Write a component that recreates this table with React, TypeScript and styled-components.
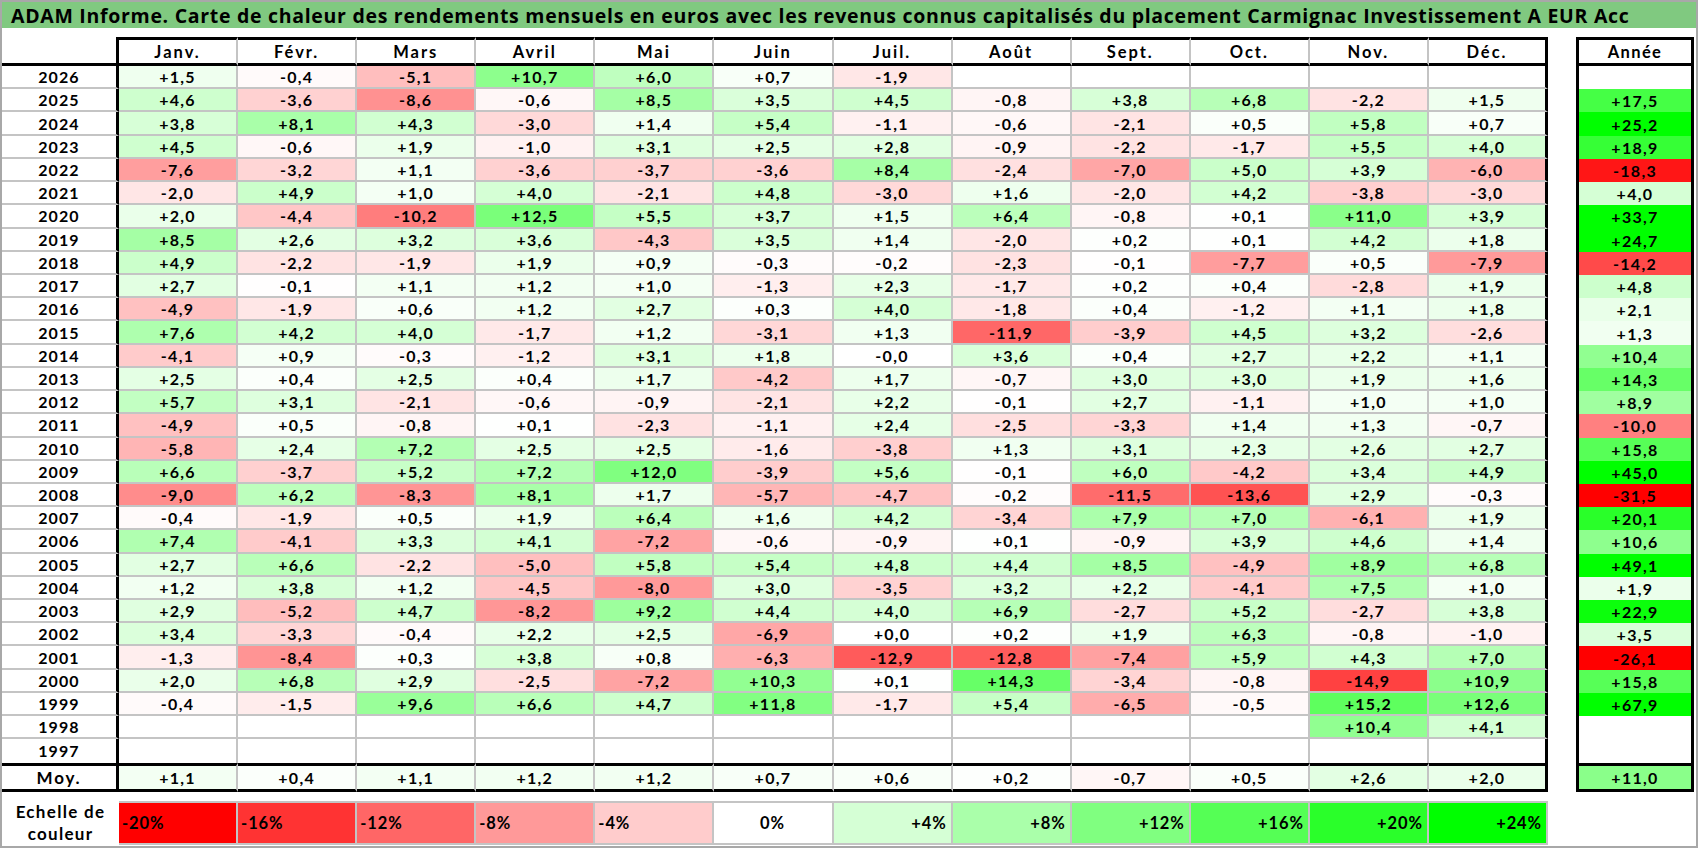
import styled, { createGlobalStyle } from 'styled-components';

const GlobalStyle = createGlobalStyle`
  html, body {
    margin: 0;
    padding: 0;
    background: #ffffff;
  }
  body {
    font-family: Lato, "Open Sans", "Liberation Sans", sans-serif;
    color: #000000;
  }
`;

const MONTHS = ['Janv.', 'Févr.', 'Mars', 'Avril', 'Mai', 'Juin', 'Juil.', 'Août', 'Sept.', 'Oct.', 'Nov.', 'Déc.'];

// year, 12 months then the year total; '.' marks an empty cell
const ROWS: [string, string][] = [
  ['2026', '+1,5 -0,4 -5,1 +10,7 +6,0 +0,7 -1,9 . . . . . .'],
  ['2025', '+4,6 -3,6 -8,6 -0,6 +8,5 +3,5 +4,5 -0,8 +3,8 +6,8 -2,2 +1,5 +17,5'],
  ['2024', '+3,8 +8,1 +4,3 -3,0 +1,4 +5,4 -1,1 -0,6 -2,1 +0,5 +5,8 +0,7 +25,2'],
  ['2023', '+4,5 -0,6 +1,9 -1,0 +3,1 +2,5 +2,8 -0,9 -2,2 -1,7 +5,5 +4,0 +18,9'],
  ['2022', '-7,6 -3,2 +1,1 -3,6 -3,7 -3,6 +8,4 -2,4 -7,0 +5,0 +3,9 -6,0 -18,3'],
  ['2021', '-2,0 +4,9 +1,0 +4,0 -2,1 +4,8 -3,0 +1,6 -2,0 +4,2 -3,8 -3,0 +4,0'],
  ['2020', '+2,0 -4,4 -10,2 +12,5 +5,5 +3,7 +1,5 +6,4 -0,8 +0,1 +11,0 +3,9 +33,7'],
  ['2019', '+8,5 +2,6 +3,2 +3,6 -4,3 +3,5 +1,4 -2,0 +0,2 +0,1 +4,2 +1,8 +24,7'],
  ['2018', '+4,9 -2,2 -1,9 +1,9 +0,9 -0,3 -0,2 -2,3 -0,1 -7,7 +0,5 -7,9 -14,2'],
  ['2017', '+2,7 -0,1 +1,1 +1,2 +1,0 -1,3 +2,3 -1,7 +0,2 +0,4 -2,8 +1,9 +4,8'],
  ['2016', '-4,9 -1,9 +0,6 +1,2 +2,7 +0,3 +4,0 -1,8 +0,4 -1,2 +1,1 +1,8 +2,1'],
  ['2015', '+7,6 +4,2 +4,0 -1,7 +1,2 -3,1 +1,3 -11,9 -3,9 +4,5 +3,2 -2,6 +1,3'],
  ['2014', '-4,1 +0,9 -0,3 -1,2 +3,1 +1,8 -0,0 +3,6 +0,4 +2,7 +2,2 +1,1 +10,4'],
  ['2013', '+2,5 +0,4 +2,5 +0,4 +1,7 -4,2 +1,7 -0,7 +3,0 +3,0 +1,9 +1,6 +14,3'],
  ['2012', '+5,7 +3,1 -2,1 -0,6 -0,9 -2,1 +2,2 -0,1 +2,7 -1,1 +1,0 +1,0 +8,9'],
  ['2011', '-4,9 +0,5 -0,8 +0,1 -2,3 -1,1 +2,4 -2,5 -3,3 +1,4 +1,3 -0,7 -10,0'],
  ['2010', '-5,8 +2,4 +7,2 +2,5 +2,5 -1,6 -3,8 +1,3 +3,1 +2,3 +2,6 +2,7 +15,8'],
  ['2009', '+6,6 -3,7 +5,2 +7,2 +12,0 -3,9 +5,6 -0,1 +6,0 -4,2 +3,4 +4,9 +45,0'],
  ['2008', '-9,0 +6,2 -8,3 +8,1 +1,7 -5,7 -4,7 -0,2 -11,5 -13,6 +2,9 -0,3 -31,5'],
  ['2007', '-0,4 -1,9 +0,5 +1,9 +6,4 +1,6 +4,2 -3,4 +7,9 +7,0 -6,1 +1,9 +20,1'],
  ['2006', '+7,4 -4,1 +3,3 +4,1 -7,2 -0,6 -0,9 +0,1 -0,9 +3,9 +4,6 +1,4 +10,6'],
  ['2005', '+2,7 +6,6 -2,2 -5,0 +5,8 +5,4 +4,8 +4,4 +8,5 -4,9 +8,9 +6,8 +49,1'],
  ['2004', '+1,2 +3,8 +1,2 -4,5 -8,0 +3,0 -3,5 +3,2 +2,2 -4,1 +7,5 +1,0 +1,9'],
  ['2003', '+2,9 -5,2 +4,7 -8,2 +9,2 +4,4 +4,0 +6,9 -2,7 +5,2 -2,7 +3,8 +22,9'],
  ['2002', '+3,4 -3,3 -0,4 +2,2 +2,5 -6,9 +0,0 +0,2 +1,9 +6,3 -0,8 -1,0 +3,5'],
  ['2001', '-1,3 -8,4 +0,3 +3,8 +0,8 -6,3 -12,9 -12,8 -7,4 +5,9 +4,3 +7,0 -26,1'],
  ['2000', '+2,0 +6,8 +2,9 -2,5 -7,2 +10,3 +0,1 +14,3 -3,4 -0,8 -14,9 +10,9 +15,8'],
  ['1999', '-0,4 -1,5 +9,6 +6,6 +4,7 +11,8 -1,7 +5,4 -6,5 -0,5 +15,2 +12,6 +67,9'],
  ['1998', '. . . . . . . . . . +10,4 +4,1 .'],
  ['1997', '. . . . . . . . . . . . .'],
];

const AVERAGE = '+1,1 +0,4 +1,1 +1,2 +1,2 +0,7 +0,6 +0,2 -0,7 +0,5 +2,6 +2,0 +11,0';

const LEGEND = [-20, -16, -12, -8, -4, 0, 4, 8, 12, 16, 20, 24];

const GRID = '#c4c4c4';
const INK = '#000000';

const heat = (v: number | null): string => {
  if (v === null || v === 0) return '#ffffff';
  if (v < 0) {
    const c = Math.round(255 * (1 - Math.min(-v / 20, 1)));
    return `rgb(255, ${c}, ${c})`;
  }
  const c = Math.round(255 * (1 - Math.min(v / 24, 1)));
  return `rgb(${c}, 255, ${c})`;
};

const toNumber = (s: string): number | null => (s === '.' ? null : parseFloat(s.replace(',', '.')));

type RowKind = 'data' | 'lastData' | 'avg';

const Page = styled.div`
  width: 1698px;
  height: 848px;
  box-sizing: border-box;
  border: 2px solid #a8a8a8;
  display: flex;
  flex-direction: column;
  overflow: hidden;
`;

const TitleBar = styled.div`
  height: 26px;
  flex: none;
  background: #80c980;
  display: flex;
  align-items: center;
  padding-left: 9px;
  font-family: "Open Sans", Lato, sans-serif;
  font-size: 19.5px;
  font-weight: 700;
  letter-spacing: 0.7px;
  white-space: nowrap;
`;

const Body = styled.div`
  display: flex;
  align-items: flex-start;
  gap: 28px;
  margin-top: 9px;
`;

const ROW_TEMPLATE = '29px repeat(30, 23.233px) 29px';

const MainGrid = styled.div`
  width: 1546px;
  display: grid;
  grid-template-columns: 117px repeat(12, 1fr);
  grid-template-rows: ${ROW_TEMPLATE};
`;

const TextCell = styled.div`
  box-sizing: border-box;
  display: flex;
  align-items: center;
  justify-content: center;
  font-size: 16px;
  font-weight: 700;
  letter-spacing: 1.3px;
  white-space: nowrap;
`;

const Corner = styled(TextCell)`
  border-right: 3px solid ${INK};
  border-bottom: 3px solid ${INK};
`;

const MonthHead = styled(TextCell)<{ $last?: boolean }>`
  font-size: 16.5px;
  letter-spacing: 2px;
  border-top: 3px solid ${INK};
  border-bottom: 3px solid ${INK};
  border-right: ${(p) => (p.$last ? `3px solid ${INK}` : `2px solid ${GRID}`)};
`;

const rowBorders = (kind: RowKind) => {
  if (kind === 'avg') return `border-top: 3px solid ${INK}; border-bottom: 3px solid ${INK};`;
  if (kind === 'lastData') return '';
  return `border-bottom: 2px solid ${GRID};`;
};

const YearLabel = styled(TextCell)<{ $kind: RowKind }>`
  letter-spacing: 1.1px;
  border-right: 3px solid ${INK};
  ${(p) => rowBorders(p.$kind)}
  ${(p) => (p.$kind === 'avg' ? 'font-size: 17px; letter-spacing: 1.8px;' : '')}
`;

const ValueCell = styled(TextCell)<{ $kind: RowKind; $bg: string; $last?: boolean }>`
  background: ${(p) => p.$bg};
  background-clip: padding-box;
  border-right: ${(p) => (p.$last ? `3px solid ${INK}` : `2px solid ${GRID}`)};
  ${(p) => rowBorders(p.$kind)}
`;

const TotalsGrid = styled.div`
  width: 118px;
  display: grid;
  grid-template-rows: ${ROW_TEMPLATE};
`;

const TotalsHead = styled(TextCell)`
  font-size: 16.5px;
  letter-spacing: 1.4px;
  border: 3px solid ${INK};
`;

const TotalCell = styled(TextCell)<{ $bg: string; $avg?: boolean }>`
  background: ${(p) => p.$bg};
  background-clip: padding-box;
  border-left: 3px solid ${INK};
  border-right: 3px solid ${INK};
  ${(p) => (p.$avg ? `border-top: 3px solid ${INK}; border-bottom: 3px solid ${INK};` : '')}
`;

const LegendRow = styled.div`
  width: 1546px;
  height: 44px;
  margin-top: 9px;
  display: grid;
  grid-template-columns: 117px repeat(12, 1fr);
`;

const LegendLabel = styled.div`
  display: flex;
  align-items: center;
  justify-content: center;
  text-align: center;
  font-size: 17px;
  font-weight: 700;
  letter-spacing: 1.3px;
  line-height: 22px;
`;

const Swatch = styled(TextCell)<{ $bg: string; $align: 'left' | 'center' | 'right' }>`
  background: ${(p) => p.$bg};
  background-clip: padding-box;
  border-top: 2px solid ${GRID};
  border-bottom: 2px solid ${GRID};
  border-right: 2px solid ${GRID};
  font-size: 16.5px;
  letter-spacing: 0.9px;
  justify-content: ${(p) => (p.$align === 'left' ? 'flex-start' : p.$align === 'right' ? 'flex-end' : 'center')};
  padding: 0 4px 0 3px;
`;

const rowKind = (i: number): RowKind => (i === ROWS.length - 1 ? 'lastData' : 'data');

export default function App() {
  const avg = AVERAGE.split(' ');
  return (
    <>
      <GlobalStyle />
      <Page>
        <TitleBar>
          ADAM Informe. Carte de chaleur des rendements mensuels en euros avec les revenus connus capitalisés du placement Carmignac Investissement A EUR Acc
        </TitleBar>
        <Body>
          <MainGrid>
            <Corner />
            {MONTHS.map((m, i) => (
              <MonthHead key={m} $last={i === 11}>{m}</MonthHead>
            ))}
            {ROWS.map(([year, line], r) => {
              const cells = line.split(' ').slice(0, 12);
              return [
                <YearLabel key={year} $kind={rowKind(r)}>{year}</YearLabel>,
                ...cells.map((c, i) => (
                  <ValueCell key={`${year}-${i}`} $kind={rowKind(r)} $bg={heat(toNumber(c))} $last={i === 11}>
                    {c === '.' ? '' : c}
                  </ValueCell>
                )),
              ];
            })}
            <YearLabel $kind="avg">Moy.</YearLabel>
            {avg.slice(0, 12).map((c, i) => (
              <ValueCell key={`avg-${i}`} $kind="avg" $bg={heat(toNumber(c))} $last={i === 11}>
                {c}
              </ValueCell>
            ))}
          </MainGrid>
          <TotalsGrid>
            <TotalsHead>Année</TotalsHead>
            {ROWS.map(([year, line]) => {
              const total = line.split(' ')[12];
              return (
                <TotalCell key={year} $bg={heat(toNumber(total))}>
                  {total === '.' ? '' : total}
                </TotalCell>
              );
            })}
            <TotalCell $avg $bg={heat(toNumber(avg[12]))}>{avg[12]}</TotalCell>
          </TotalsGrid>
        </Body>
        <LegendRow>
          <LegendLabel>Echelle de<br />couleur</LegendLabel>
          {LEGEND.map((v) => (
            <Swatch key={v} $bg={heat(v)} $align={v < 0 ? 'left' : v > 0 ? 'right' : 'center'}>
              {v > 0 ? `+${v}%` : `${v}%`}
            </Swatch>
          ))}
        </LegendRow>
      </Page>
    </>
  );
}
